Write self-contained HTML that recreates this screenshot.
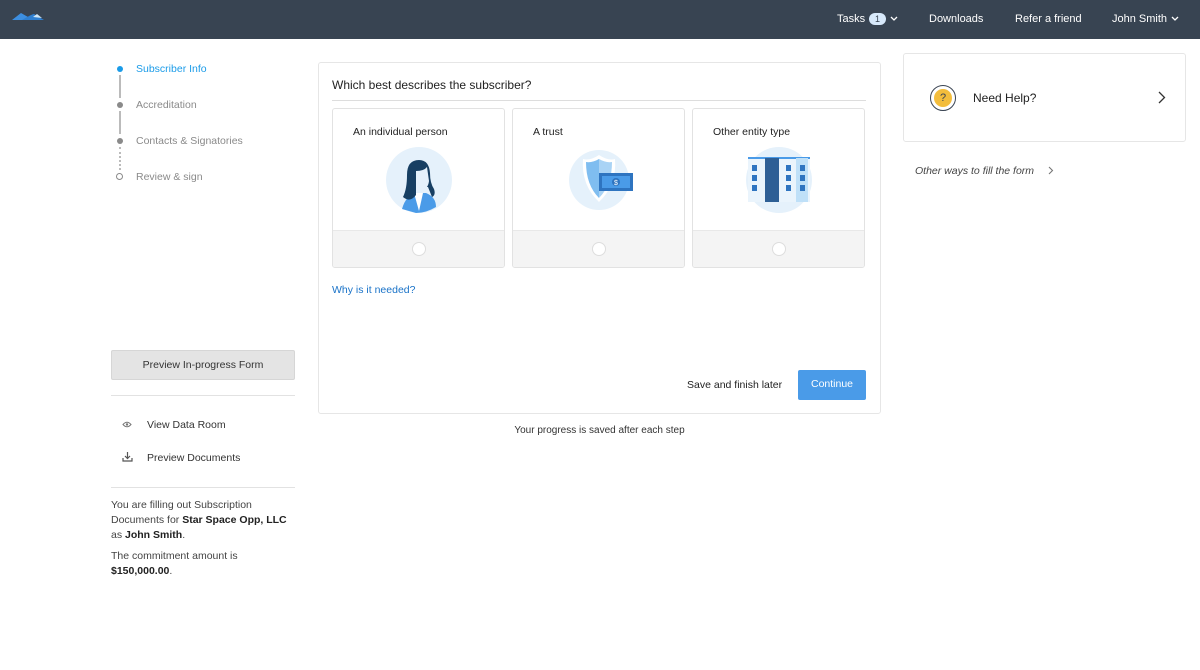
<!DOCTYPE html>
<html><head><meta charset="utf-8"><style>
*{box-sizing:border-box;margin:0;padding:0}
body{width:1200px;height:670px;background:#fff;font-family:"Liberation Sans",sans-serif;color:#2a2f36;position:relative;overflow:hidden;font-size:11px}
.abs{position:absolute}
.hdr{left:0;top:0;width:1200px;height:39px;background:#384452;color:#fff;font-size:11px}
.hdr span{position:absolute;top:13px}
.step{position:absolute;left:136px;font-size:10.5px;color:#8a8a8a}
.dot{position:absolute;left:117px;width:6px;height:6px;border-radius:50%;background:#8a8a8a}
.card{position:absolute;top:108px;width:173px;height:160px;border:1px solid #e2e2e2;border-radius:3px;overflow:hidden;background:#fff}
.card .t{position:absolute;left:20px;top:17px;font-size:10.5px;color:#222}
.card .f{position:absolute;left:0;bottom:0;width:100%;height:37px;background:#f4f4f4;border-top:1px solid #e8e8e8}
.card .r{position:absolute;left:79px;top:11px;width:14px;height:14px;border-radius:50%;background:#fff;border:1px solid #ddd}
.card svg{position:absolute;left:53px;top:38px}
</style></head><body>
<div class="abs hdr">
<svg class="abs" style="left:12px;top:11px" width="34" height="10"><path d="M0 9 L9 2 L16 6 L22 9 Z" fill="#3d8fe0"/><path d="M10 9 Q20 3 22 3 L32 9 Z" fill="#2f7fd0"/><path d="M21 6 L25 3 L30 7 Z" fill="#cfe6f5"/></svg>
<span style="left:837px">Tasks</span>
<span style="left:869px;top:13px;width:17px;height:12px;border-radius:6px;background:#d7e9fb;color:#384452;font-size:9px;text-align:center;line-height:12px">1</span>
<svg class="abs" style="left:890px;top:16px" width="8" height="6"><path d="M1 1 L4 4 L7 1" stroke="#fff" stroke-width="1.3" fill="none"/></svg>
<span style="left:929px">Downloads</span>
<span style="left:1015px">Refer a friend</span>
<span style="left:1112px">John Smith</span>
<svg class="abs" style="left:1171px;top:16px" width="8" height="6"><path d="M1 1 L4 4 L7 1" stroke="#fff" stroke-width="1.3" fill="none"/></svg>
</div>

<div class="abs" style="left:119px;top:75px;width:2px;height:23px;background:#bbb"></div>
<div class="abs" style="left:119px;top:111px;width:2px;height:23px;background:#bbb"></div>
<div class="abs" style="left:119px;top:147px;width:0;height:23px;border-left:2px dotted #bbb"></div>
<div class="dot" style="top:66px;background:#1a9be8"></div>
<div class="dot" style="top:102px"></div>
<div class="dot" style="top:138px"></div>
<div class="dot" style="top:173px;background:#fff;border:1px solid #8a8a8a;width:7px;height:7px;left:116px"></div>
<div class="step" style="top:63px;color:#1a9be8">Subscriber Info</div>
<div class="step" style="top:99px">Accreditation</div>
<div class="step" style="top:135px">Contacts &amp; Signatories</div>
<div class="step" style="top:171px">Review &amp; sign</div>

<div class="abs" style="left:111px;top:350px;width:184px;height:30px;background:#e4e4e4;border:1px solid #d6d6d6;border-radius:2px;text-align:center;line-height:29px;font-size:10.5px;color:#333">Preview In-progress Form</div>
<div class="abs" style="left:111px;top:395px;width:184px;height:1px;background:#e2e2e2"></div>
<svg class="abs" style="left:122px;top:421px" width="10" height="7"><path d="M1 3.5 Q5 -1 9 3.5 Q5 8 1 3.5Z" stroke="#777" fill="none"/><circle cx="5" cy="3.5" r="1.2" fill="#777"/></svg>
<div class="abs" style="left:147px;top:419px;font-size:10.5px;color:#333">View Data Room</div>
<svg class="abs" style="left:122px;top:452px" width="11" height="10"><path d="M5.5 0 V6 M3 4 L5.5 6.5 L8 4 M1 6 V9 H10 V6" stroke="#555" stroke-width="1.2" fill="none"/></svg>
<div class="abs" style="left:147px;top:452px;font-size:10.5px;color:#333">Preview Documents</div>
<div class="abs" style="left:111px;top:487px;width:184px;height:1px;background:#e2e2e2"></div>
<div class="abs" style="left:111px;top:498px;width:184px;font-size:10.5px;line-height:15px;color:#444">You are filling out Subscription Documents for <b style="color:#222">Star Space Opp, LLC</b> as <b style="color:#222">John Smith</b>.</div>
<div class="abs" style="left:111px;top:549px;width:184px;font-size:10.5px;line-height:15px;color:#444">The commitment amount is <b style="color:#222">$150,000.00</b>.</div>

<div class="abs" style="left:318px;top:62px;width:563px;height:352px;border:1px solid #e6e6e6;border-radius:3px"></div>
<div class="abs" style="left:332px;top:78px;font-size:12px;color:#222">Which best describes the subscriber?</div>
<div class="abs" style="left:332px;top:100px;width:534px;height:1px;background:#ddd"></div>

<div class="card" style="left:332px"><div class="t">An individual person</div>
<svg width="66" height="66"><circle cx="33" cy="33" r="33" fill="#e5f1fb"/><path d="M16 62 Q20 48 30 46 L40 46 Q50 50 50 60 Q40 66 30 66 Z" fill="#4a9be8"/><path d="M28 46 L33 64 L37 46Z" fill="#fff"/><path d="M33 13 Q21 13 21 28 Q21 42 17 50 Q24 56 30 48 L30 40 L42 40 L46 50 Q50 48 48 42 Q44 36 44 26 Q43 13 33 13Z" fill="#173f63"/><path d="M30 24 Q38 24 41 20 L43 34 Q42 42 36 43 L30 40Z" fill="#e5f1fb"/></svg>
<div class="f"><div class="r"></div></div></div>

<div class="card" style="left:512px"><div class="t">A trust</div>
<svg width="80" height="66"><circle cx="33" cy="33" r="30" fill="#e5f1fb"/><path d="M33 8 Q24 14 17 12 Q15 38 33 55 Q51 38 49 12 Q42 14 33 8Z" fill="#fff"/><path d="M33 12 Q26 16 20 15 Q20 38 33 51Z" fill="#7fbdf0"/><path d="M33 12 Q40 16 46 15 Q46 38 33 51Z" fill="#a9d3f5"/><rect x="33" y="26" width="34" height="18" fill="#2e74c0"/><rect x="36" y="29" width="28" height="12" fill="#4a9be8"/><circle cx="50" cy="35" r="4" fill="#2e74c0"/><text x="48" y="38" font-size="7" fill="#fff">$</text></svg>
<div class="f"><div class="r"></div></div></div>

<div class="card" style="left:692px"><div class="t">Other entity type</div>
<svg width="70" height="66"><circle cx="33" cy="33" r="33" fill="#e5f1fb"/><rect x="2" y="10" width="62" height="45" fill="#eaf4fc"/><rect x="2" y="10" width="62" height="2" fill="#4a9be8"/><rect x="19" y="11" width="14" height="44" fill="#2e5f95"/><rect x="50" y="11" width="12" height="44" fill="#bfe0f8"/><g fill="#2e74c0"><rect x="6" y="18" width="5" height="6"/><rect x="6" y="28" width="5" height="6"/><rect x="6" y="38" width="5" height="6"/><rect x="40" y="18" width="5" height="6"/><rect x="40" y="28" width="5" height="6"/><rect x="40" y="38" width="5" height="6"/><rect x="54" y="18" width="5" height="6"/><rect x="54" y="28" width="5" height="6"/><rect x="54" y="38" width="5" height="6"/></g></svg>
<div class="f"><div class="r"></div></div></div>

<div class="abs" style="left:332px;top:284px;font-size:10.5px;color:#1a73c8">Why is it needed?</div>
<div class="abs" style="left:687px;top:379px;font-size:10.5px;color:#222">Save and finish later</div>
<div class="abs" style="left:798px;top:370px;width:68px;height:30px;background:#4a9be8;border-radius:2px;color:#fff;font-size:10.5px;text-align:center;line-height:29px">Continue</div>
<div class="abs" style="left:318px;top:425px;width:563px;text-align:center;font-size:10px;color:#333">Your progress is saved after each step</div>

<div class="abs" style="left:903px;top:53px;width:283px;height:89px;border:1px solid #e6e6e6;border-radius:3px"></div>
<div class="abs" style="left:930px;top:85px;width:26px;height:26px;border-radius:50%;border:1.5px solid #3a4452;background:#fff"></div>
<div class="abs" style="left:934px;top:89px;width:18px;height:18px;border-radius:50%;background:#f3bd3c;text-align:center;line-height:18px;font-size:11px;color:#3a4452">?</div>
<div class="abs" style="left:973px;top:91px;font-size:12px;color:#222">Need Help?</div>
<svg class="abs" style="left:1158px;top:91px" width="8" height="13"><path d="M1 1 L6.5 6.5 L1 12" stroke="#333" stroke-width="1.3" fill="none"/></svg>
<div class="abs" style="left:915px;top:165px;font-size:10.5px;font-style:italic;color:#444">Other ways to fill the form</div>
<svg class="abs" style="left:1048px;top:166px" width="6" height="9"><path d="M1 1 L4.5 4.5 L1 8" stroke="#777" stroke-width="1.1" fill="none"/></svg>
</body></html>
